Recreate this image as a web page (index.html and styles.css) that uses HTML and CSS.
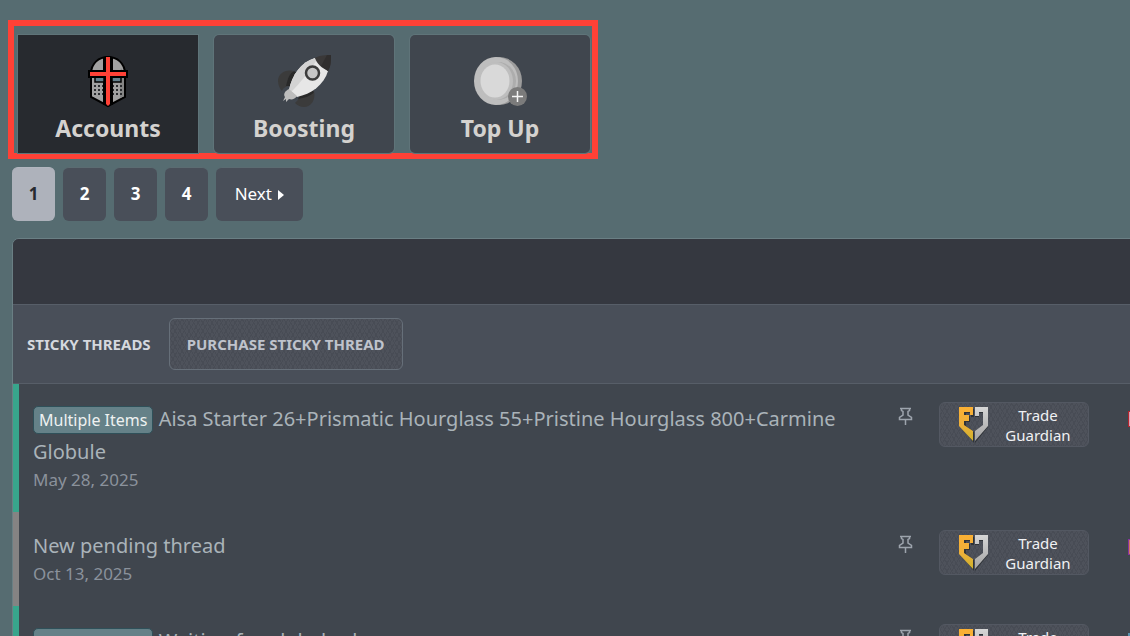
FILE: index.html
```
<!DOCTYPE html>
<html lang="en">
<head>
    <meta charset="UTF-8">
    <meta name="viewport" content="width=device-width, initial-scale=1.0">
    <title>Marketplace</title>
    <link rel="stylesheet" href="styles.css">
</head>
<body>
    <!-- Shared icons -->
    <svg class="sprite" aria-hidden="true">
        <defs>
            <linearGradient id="gold" x1="0" y1="0" x2="0" y2="1">
                <stop offset="0" stop-color="#fbb034"/>
                <stop offset="0.5" stop-color="#eeb03a"/>
                <stop offset="1" stop-color="#cdb22c"/>
            </linearGradient>
            <linearGradient id="silver" x1="0" y1="0" x2="0" y2="1">
                <stop offset="0" stop-color="#d6d6d6"/>
                <stop offset="1" stop-color="#a3a3a3"/>
            </linearGradient>
        </defs>
        <symbol id="pin" viewBox="0 0 15 19">
            <path d="M2 1.500H13M3.500 1.500V3.500L5 4.500V8L1.500 10.500V12.500H13.500V10.500L10 8V4.500L11.500 3.500V1.500M7.500 12.500V18" fill="none" stroke="#9da4ad" stroke-width="1.500"/>
        </symbol>
        <symbol id="shield" viewBox="0 0 30 36">
            <path d="M1 1H14V9H11V5H6V8H10V14H6V18L14 24V35L1 19Z" fill="#2f3338" transform="translate(1 1)"/>
            <path d="M16 24L24 18V5H20V9H16V1H29V19L16 35Z" fill="#2f3338" transform="translate(0 1)"/>
            <path d="M0 0H14V8H11V5H5V8H10V14H5V18L14 24V34L0 19Z" fill="url(#gold)"/>
            <path d="M16 24L24 18V5H20V9H16V0H29V19L16 34Z" fill="url(#silver)"/>
        </symbol>
    </svg>

    <nav class="tabs">
        <a class="tab active" href="#accounts">
            <svg width="54" height="54" viewBox="0 0 54 54">
                <path d="M10 20C10 9 18 3 27 3S44 9 44 20V43L27 52L10 43Z" fill="#a1a1a1" stroke="#000" stroke-width="2"/>
                <path d="M40 14C42 17 43 19 43 21V42L39 44V20Z" fill="#858585"/>
                <path d="M13 32H23M13 36H23M13 40H23M31 32H42M31 36H42M31 40H42" stroke="#2b2d30" stroke-width="2" stroke-dasharray="2 2"/>
                <path d="M23 3V51M31 3V51" stroke="#000" stroke-width="2"/>
                <path d="M14 23H23V28H14ZM31 23H40V28H31Z" fill="#64808c" stroke="#000" stroke-width="1.500"/>
                <path d="M8 17H46V23H8Z" fill="#ff4136" stroke="#000" stroke-width="2"/>
                <path d="M24 2H30V51L27 53L24 51Z" fill="#000"/>
                <path d="M9 18H45V22H9Z" fill="#ff4136"/>
                <path d="M25 3H29V50L27 52L25 50Z" fill="#ff4136"/>
            </svg>
            <span>Accounts</span>
        </a>
        <a class="tab" href="#boosting">
            <svg width="54" height="54" viewBox="0 0 54 54">
                <path d="M16 17C8 15 1 20 1 27C1 31 3 35 5 37C6 34 9 32 13 32Z" fill="#3b3b3b"/>
                <path d="M17 17C12 20 11 24 9 32L14 32L20 19Z" fill="#292929"/>
                <path d="M37 37C39 46 34 53 27 53C23 53 20 51 18 49C20 47 22 45 23 42Z" fill="#3b3b3b"/>
                <path d="M37 38C34 42 27 44 21 45L23 41L34 36Z" fill="#292929"/>
                <path d="M38 4C24 8 15 21 12 36L20 43C34 40 47 31 51 17Z" fill="#e7e7e7"/>
                <path d="M38 4C24 8 15 21 12 36L14 38C23 29 34 16 39 7Z" fill="#d3d3d3"/>
                <path d="M38 4C43 1 49 1 54 1C54 7 54 12 51 17C45 14 40 10 38 4Z" fill="#3a3838"/>
                <path d="M50 1H54C54 7 54 12 51 17C49 15 46 14 44 12Z" fill="#302e2e"/>
                <circle cx="35.500" cy="19" r="6.500" fill="#c6c6c6" stroke="#3b3b3b" stroke-width="2.500"/>
                <path d="M12 35L20 42C18 45 15 46 12 45L9 48V45L6 47L8 43C6 40 8 37 12 35Z" fill="#bdbdbd"/>
            </svg>
            <span>Boosting</span>
        </a>
        <a class="tab" href="#topup">
            <svg width="54" height="54" viewBox="0 0 54 54">
                <ellipse cx="26" cy="27" rx="23" ry="24" fill="#9c9c9c"/>
                <ellipse cx="23" cy="27" rx="22" ry="24" fill="#bebebe"/>
                <ellipse cx="25" cy="27" rx="18" ry="19" fill="#adadad"/>
                <ellipse cx="23" cy="27" rx="17" ry="19" fill="#bebebe"/>
                <ellipse cx="22" cy="27" rx="14.500" ry="16.500" fill="#d9d9d9"/>
                <circle cx="44.500" cy="42.500" r="9.500" fill="#7b7b7b"/>
                <path d="M44.500 37V48M39 42.500H50" stroke="#f4f4f4" stroke-width="1.500"/>
            </svg>
            <span>Top Up</span>
        </a>
    </nav>

    <nav class="pagination">
        <a class="page current" href="#1">1</a>
        <a class="page" href="#2">2</a>
        <a class="page" href="#3">3</a>
        <a class="page" href="#4">4</a>
        <a class="page next" href="#2">Next
            <svg width="6" height="10" viewBox="0 0 6 10"><path d="M0 0L6 5L0 10Z" fill="#fff"/></svg>
        </a>
    </nav>

    <section class="panel">
        <div class="panel-header"></div>
        <div class="sticky-bar">
            <h2>STICKY THREADS</h2>
            <button class="purchase textured" type="button">PURCHASE STICKY THREAD</button>
        </div>

        <article class="thread">
            <div class="thread-main">
                <h3><a class="label" href="#multiple">Multiple Items</a> <a href="#t1">Aisa Starter 26+Prismatic Hourglass 55+Pristine Hourglass 800+Carmine Globule</a></h3>
                <time>May 28, 2025</time>
            </div>
            <svg class="pin" width="15" height="19"><use href="#pin"/></svg>
            <button class="guardian textured" type="button"><svg width="30" height="36"><use href="#shield"/></svg><span>Trade Guardian</span></button>
            <div class="avatar red"></div>
        </article>

        <article class="thread pending">
            <div class="thread-main">
                <h3><a href="#t2">New pending thread</a></h3>
                <time>Oct 13, 2025</time>
            </div>
            <svg class="pin" width="15" height="19"><use href="#pin"/></svg>
            <button class="guardian textured" type="button"><svg width="30" height="36"><use href="#shield"/></svg><span>Trade Guardian</span></button>
            <div class="avatar purple"></div>
        </article>

        <article class="thread">
            <div class="thread-main">
                <h3><a class="label" href="#multiple">Multiple Items</a> <a href="#t3">Waiting for global ask</a></h3>
            </div>
            <svg class="pin" width="15" height="19"><use href="#pin"/></svg>
            <button class="guardian textured" type="button"><svg width="30" height="36"><use href="#shield"/></svg><span>Trade Guardian</span></button>
            <div class="avatar blue"></div>
        </article>
    </section>
</body>
</html>
```
FILE: styles.css
```
* {
    box-sizing: border-box;
}

body {
    font-family: "Segoe UI", "Noto Sans", sans-serif;
    height: 100vh;
    margin: 0;
    padding: 20px 0 0 8px;
    background-color: #566c71;
    color: #aab3b9;
    overflow: hidden;
}

a {
    color: inherit;
    text-decoration: none;
}

button {
    font-family: inherit;
    cursor: pointer;
}

.sprite {
    position: absolute;
    width: 0;
    height: 0;
}

/* Category tabs */
.tabs {
    display: flex;
    gap: 16px;
    width: fit-content;
    padding: 9px 2px 0 4px;
    border: 6px solid #ff4136;
}

.tab {
    display: flex;
    flex-direction: column;
    align-items: center;
    width: 180px;
    height: 118px;
    padding-top: 19px;
    border-radius: 5px;
    background-color: #40464e;
    box-shadow: 0 0 0 1px #5f7479;
    color: #d4d2cf;
    font-size: 23px;
    font-weight: 700;
    line-height: 40px;
}

.tab.active {
    background-color: #272a2f;
    border-radius: 0;
}

/* Pagination */
.pagination {
    display: flex;
    gap: 8px;
    padding: 8px 0 0 4px;
}

.page {
    width: 43px;
    height: 54px;
    border-radius: 6px;
    border-top: 1px solid #5b6b71;
    background-color: #494f59;
    color: #fff;
    font-size: 17px;
    font-weight: 700;
    line-height: 52px;
    text-align: center;
}

.page.current {
    border-color: #b2b6bf;
    background-color: #aeb2bb;
    color: #272a2f;
}

.page.next {
    width: 87px;
    font-weight: 400;
}

.page.next svg {
    margin-left: 2px;
}

/* Thread list, runs past the right edge */
.panel {
    margin: 17px -60px 0 4px;
    border: 1px solid #6a7f84;
    border-radius: 7px;
    background-color: #40464e;
    overflow: hidden;
}

.panel-header {
    height: 65px;
    background-color: #353840;
}

.sticky-bar {
    display: flex;
    align-items: center;
    gap: 18px;
    height: 80px;
    padding: 0 14px;
    border: 1px solid #575e68;
    border-width: 1px 0;
    background-color: #494f59;
}

.sticky-bar h2 {
    margin: 0;
    color: #d5d8de;
    font-size: 15px;
}

.textured {
    background-color: #4e525b;
    background-image:
        repeating-linear-gradient(60deg, transparent 0 3px, #484c55 3px 4px),
        repeating-linear-gradient(-60deg, transparent 0 3px, #484c55 3px 4px);
}

.purchase {
    width: 234px;
    height: 52px;
    border: 1px solid #666f79;
    border-radius: 6px;
    color: #bfc3cc;
    font-size: 15px;
    font-weight: 700;
}

.thread {
    display: grid;
    grid-template-columns: 1fr 41px 189px 48px;
    padding: 0 13px 0 14px;
    border-left: 6px solid #38a58c;
}

.thread.pending {
    border-color: #858383;
}

.thread-main {
    padding: 19px 18px 19px 0;
}

.thread h3 {
    margin: 0;
    font-size: 20px;
    font-weight: 400;
    line-height: 30px;
}

.thread time {
    display: block;
    color: #8b929c;
    font-size: 17px;
    line-height: 26px;
}

.label {
    display: inline-block;
    margin: 3px 0;
    padding: 0 5px;
    border: 1px solid #2f5059;
    border-radius: 5px;
    background-color: #658188;
    color: #eef1f1;
    font-size: 16px;
    line-height: 26px;
}

.pin {
    margin-top: 23px;
}

.guardian {
    display: flex;
    align-items: center;
    gap: 14px;
    width: 150px;
    height: 45px;
    margin-top: 18px;
    padding: 0 0 0 19px;
    border: 1px solid #535862;
    border-radius: 6px;
    color: #f0f1f3;
    font-size: 15px;
    line-height: 20px;
}

.guardian svg {
    flex: none;
}

.guardian span {
    width: 70px;
}

.avatar {
    width: 48px;
    height: 16px;
    margin-top: 27px;
    border: 1px solid transparent;
}

.red {
    border-color: #b3252d;
    background-color: #d8a0b4;
}

.purple {
    border-color: #86339f;
    background-color: #d0785a;
}

.blue {
    background-color: #5b93b0;
}
```
